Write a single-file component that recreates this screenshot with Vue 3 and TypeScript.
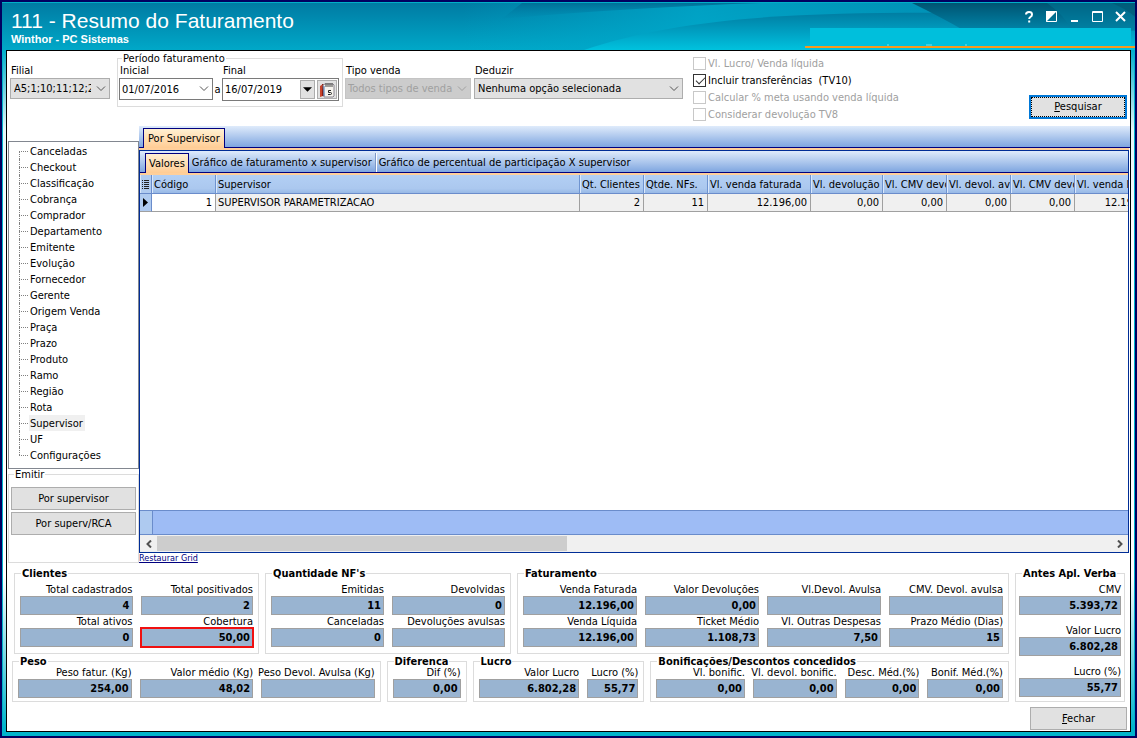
<script setup lang="ts">
import { ref } from 'vue'

interface Field {
  label: string
  value: string
  highlight?: boolean
}
interface Group {
  id: string
  title: string
  fields: Field[]
}
interface Column {
  key: string
  title: string
  value: string
  numeric: boolean
}

const dimensions: string[] = [
  'Canceladas', 'Checkout', 'Classificação', 'Cobrança', 'Comprador', 'Departamento',
  'Emitente', 'Evolução', 'Fornecedor', 'Gerente', 'Origem Venda', 'Praça', 'Prazo',
  'Produto', 'Ramo', 'Região', 'Rota', 'Supervisor', 'UF', 'Configurações',
]
const selected = ref('Supervisor')

const innerTabs: string[] = [
  'Valores',
  'Gráfico de faturamento x supervisor',
  'Gráfico de percentual de participação X supervisor',
]
const activeTab = ref('Valores')

const checks = ref([
  { id: 'chk-lucro', label: 'Vl. Lucro/ Venda líquida', on: false, disabled: true },
  { id: 'chk-transf', label: 'Incluir transferências  (TV10)', on: true, disabled: false },
  { id: 'chk-meta', label: 'Calcular % meta usando venda líquida', on: false, disabled: true },
  { id: 'chk-tv8', label: 'Considerar devolução TV8', on: false, disabled: true },
])

const columns: Column[] = [
  { key: 'codigo', title: 'Código', value: '1', numeric: true },
  { key: 'supervisor', title: 'Supervisor', value: 'SUPERVISOR PARAMETRIZACAO', numeric: false },
  { key: 'clientes', title: 'Qt. Clientes', value: '2', numeric: true },
  { key: 'nfs', title: 'Qtde. NFs.', value: '11', numeric: true },
  { key: 'faturada', title: 'Vl. venda faturada', value: '12.196,00', numeric: true },
  { key: 'devolucao', title: 'Vl. devolução', value: '0,00', numeric: true },
  { key: 'cmv1', title: 'Vl. CMV devo', value: '0,00', numeric: true },
  { key: 'avulsa', title: 'Vl. devol. av', value: '0,00', numeric: true },
  { key: 'cmv2', title: 'Vl. CMV devo', value: '0,00', numeric: true },
  { key: 'liquida', title: 'Vl. venda lí', value: '12.196,00', numeric: true },
]

const topGroups: Group[] = [
  {
    id: 'clientes', title: 'Clientes', fields: [
      { label: 'Total cadastrados', value: '4' },
      { label: 'Total positivados', value: '2' },
      { label: 'Total ativos', value: '0' },
      { label: 'Cobertura', value: '50,00', highlight: true },
    ],
  },
  {
    id: 'notas', title: "Quantidade NF's", fields: [
      { label: 'Emitidas', value: '11' },
      { label: 'Devolvidas', value: '0' },
      { label: 'Canceladas', value: '0' },
      { label: 'Devoluções avulsas', value: '' },
    ],
  },
  {
    id: 'faturamento', title: 'Faturamento', fields: [
      { label: 'Venda Faturada', value: '12.196,00' },
      { label: 'Valor Devoluções', value: '0,00' },
      { label: 'Vl.Devol. Avulsa', value: '' },
      { label: 'CMV. Devol. avulsa', value: '' },
      { label: 'Venda Líquida', value: '12.196,00' },
      { label: 'Ticket Médio', value: '1.108,73' },
      { label: 'Vl. Outras Despesas', value: '7,50' },
      { label: 'Prazo Médio (Dias)', value: '15' },
    ],
  },
]
const lowerGroups: Group[] = [
  {
    id: 'peso', title: 'Peso', fields: [
      { label: 'Peso fatur. (Kg)', value: '254,00' },
      { label: 'Valor médio (Kg)', value: '48,02' },
      { label: 'Peso Devol. Avulsa (Kg)', value: '' },
    ],
  },
  { id: 'diferenca', title: 'Diferenca', fields: [{ label: 'Dif (%)', value: '0,00' }] },
  {
    id: 'lucro', title: 'Lucro', fields: [
      { label: 'Valor Lucro', value: '6.802,28' },
      { label: 'Lucro (%)', value: '55,77' },
    ],
  },
  {
    id: 'bonificacoes', title: 'Bonificações/Descontos concedidos', fields: [
      { label: 'Vl. bonific.', value: '0,00' },
      { label: 'Vl. devol. bonific.', value: '0,00' },
      { label: 'Desc. Méd.(%)', value: '0,00' },
      { label: 'Bonif. Méd.(%)', value: '0,00' },
    ],
  },
]
const groupRows: { name: string; groups: Group[] }[] = [
  { name: 'row-top', groups: topGroups },
  { name: 'row-lower', groups: lowerGroups },
]
const verba: Field[] = [
  { label: 'CMV', value: '5.393,72' },
  { label: 'Valor Lucro', value: '6.802,28' },
  { label: 'Lucro (%)', value: '55,77' },
]
</script>

<template>
  <div class="window">
    <header class="titlebar">
      <svg class="waves" viewBox="0 0 1133 48" preserveAspectRatio="none" aria-hidden="true">
        <defs>
          <linearGradient id="base" x1="0" y1="0" x2="0" y2="1">
            <stop offset="0" stop-color="#007ba3" />
            <stop offset="1" stop-color="#00a8c8" />
          </linearGradient>
          <linearGradient id="glow" x1="0" y1="0" x2="1" y2="0">
            <stop offset="0" stop-color="#00a9cb" stop-opacity="0" />
            <stop offset="0.35" stop-color="#00a9cb" stop-opacity="0.8" />
            <stop offset="1" stop-color="#0086ac" stop-opacity="0.8" />
          </linearGradient>
          <linearGradient id="top" x1="0" y1="0" x2="0" y2="1">
            <stop offset="0" stop-color="#006f97" />
            <stop offset="1" stop-color="#0088ae" stop-opacity="0.2" />
          </linearGradient>
          <linearGradient id="hill" x1="0" y1="0" x2="0" y2="1">
            <stop offset="0" stop-color="#007da2" />
            <stop offset="0.55" stop-color="#00a2c4" />
            <stop offset="1" stop-color="#00c2de" />
          </linearGradient>
          <linearGradient id="night" x1="0" y1="0" x2="0" y2="1">
            <stop offset="0" stop-color="#005472" />
            <stop offset="1" stop-color="#0085a9" />
          </linearGradient>
        </defs>
        <rect width="1133" height="48" fill="url(#base)" />
        <path d="M460 48V0H1133V48Z" fill="url(#glow)" />
        <path d="M520 0H760Q640 4 500 16Z" fill="url(#top)" />
        <path d="M582 48C680 14 800 9 960 10C1030 11 1090 14 1133 18V48Z" fill="url(#hill)" />
        <path d="M910 0H1133V28H962Q938 14 910 0Z" fill="url(#night)" />
        <path d="M1045 0Q1062 12 1070 28H1133V0Z" fill="#007d9e" opacity=".45" />
        <path d="M1110 0Q1124 6 1133 14V0Z" fill="#00526e" opacity=".5" />
      </svg>
      <div class="titles">
        <h1>111 - Resumo do Faturamento</h1>
        <p>Winthor - PC Sistemas</p>
      </div>
      <div class="corner">
        <div class="window-buttons">
          <button type="button" aria-label="Ajuda">
            <svg viewBox="0 0 12 12"><path d="M3 3.600Q3 1 6 1t3 2.400Q9 5 7.400 6Q6.200 6.800 6.200 8M5.200 10.500h2" stroke-width="2" /></svg>
          </button>
          <button type="button" aria-label="Recolher">
            <svg viewBox="0 0 12 12"><path d="M.5 .5h10v10h-10z" /><path d="M0 0H11L0 11Z" fill="#fff" stroke="none" /></svg>
          </button>
          <button type="button" aria-label="Minimizar">
            <svg viewBox="0 0 12 12"><path d="M2 10h7" stroke-width="2" /></svg>
          </button>
          <button type="button" aria-label="Maximizar">
            <svg viewBox="0 0 12 12"><path d="M.5 .5h10v10h-10zM0 1.500h11" /></svg>
          </button>
          <button type="button" aria-label="Fechar janela">
            <svg viewBox="0 0 12 12"><path d="M1 1l9 9M10 1l-9 9" stroke-width="2" /></svg>
          </button>
        </div>
        <div class="banner">
          <svg viewBox="0 0 90 2" aria-hidden="true"><path d="M4 1h2M43 1h6M82 1h2" stroke="#7fdcea" /></svg>
        </div>
      </div>
    </header>

    <div class="frame">
      <main class="content">
        <form class="toolbar" @submit.prevent>
          <div class="field filial">
            <label for="filial">Filial</label>
            <span class="combo">
              <select id="filial"><option>A5;1;10;11;12;2;3;4</option></select>
              <svg class="chevron" viewBox="0 0 10 6"><path d="M1 .5l4 4 4-4" /></svg>
            </span>
          </div>

          <fieldset class="periodo">
            <legend>Período faturamento</legend>
            <div class="field inicial">
              <label for="inicial">Inicial</label>
              <span class="datebox">
                <input id="inicial" type="text" value="01/07/2016" />
                <button type="button" class="drop" aria-label="Abrir data inicial">
                  <svg viewBox="0 0 10 6"><path d="M1 .5l4 4 4-4" /></svg>
                </button>
              </span>
            </div>
            <span class="ate">a</span>
            <div class="field final">
              <label for="final">Final</label>
              <span class="datebox tall">
                <input id="final" type="text" value="16/07/2019" />
                <button type="button" class="raised" aria-label="Abrir data final">
                  <svg class="triangle" viewBox="0 0 10 5"><path d="M0 0h10L5 5z" /></svg>
                </button>
                <button type="button" class="raised calendar" aria-label="Calendário">
                  <svg viewBox="0 0 16 16">
                    <path d="M1 4l3-2v12l-3 1z" fill="#c8442c" />
                    <path d="M3 2h2v12H3z" fill="#8a1d14" />
                    <path d="M4 3l2-1h8l1 1v11l-1 1H5z" fill="#f6f4ee" stroke="#8a8690" />
                    <path d="M5 4v10" stroke="#4c79b8" />
                    <path d="M7 1v4M9 1v4M11 1v4M13 1v4" stroke="#444" />
                    <path d="M12 8.500H9.500v2h2q1 0 1 1t-1 1H9" stroke="#222" fill="none" />
                  </svg>
                </button>
              </span>
            </div>
          </fieldset>

          <div class="field tipo">
            <label for="tipo">Tipo venda</label>
            <span class="combo">
              <select id="tipo" disabled><option>Todos tipos de venda</option></select>
              <svg class="chevron off" viewBox="0 0 10 6"><path d="M1 .5l4 4 4-4" /></svg>
            </span>
          </div>
          <div class="field deduzir">
            <label for="deduzir">Deduzir</label>
            <span class="combo">
              <select id="deduzir"><option>Nenhuma opção selecionada</option></select>
              <svg class="chevron" viewBox="0 0 10 6"><path d="M1 .5l4 4 4-4" /></svg>
            </span>
          </div>

          <div class="checks">
            <label v-for="c in checks" :key="c.id" :for="c.id" :class="{ off: c.disabled }">
              <input :id="c.id" v-model="c.on" type="checkbox" :disabled="c.disabled" />
              <span>{{ c.label }}</span>
            </label>
          </div>

          <button type="submit" class="push search"><span><u>P</u>esquisar</span></button>
        </form>

        <div class="work">
          <aside class="sidebar">
            <ul class="tree">
              <li v-for="d in dimensions" :key="d">
                <button type="button" :class="{ current: d === selected }" @click="selected = d">{{ d }}</button>
              </li>
            </ul>
            <fieldset class="emitir">
              <legend>Emitir</legend>
              <button type="button" class="push">Por supervisor</button>
              <button type="button" class="push">Por superv/RCA</button>
            </fieldset>
          </aside>

          <section class="panel">
            <div class="strip outer"><button type="button" class="tab active">Por Supervisor</button></div>
            <div class="pane">
              <div class="strip inner">
                <button
                  v-for="t in innerTabs" :key="t" type="button" class="tab"
                  :class="{ active: t === activeTab }" @click="activeTab = t"
                >{{ t }}</button>
              </div>
              <div class="grid">
                <table>
                  <colgroup>
                    <col class="c-mark" />
                    <col v-for="c in columns" :key="c.key" :class="'c-' + c.key" />
                  </colgroup>
                  <thead>
                    <tr>
                      <th class="mark" aria-label="Colunas">
                        <svg viewBox="0 0 8 9"><path d="M0 .5h1M2 .5h5M0 2.500h1M2 2.500h5M0 4.500h1M2 4.500h5M0 6.500h1M2 6.500h5M0 8.500h1M2 8.500h5" /></svg>
                      </th>
                      <th v-for="c in columns" :key="c.key">{{ c.title }}</th>
                    </tr>
                  </thead>
                  <tbody>
                    <tr>
                      <td class="mark"><svg viewBox="0 0 8 9"><path d="M1 0l5 4.500L1 9z" fill="#000" stroke="none" /></svg></td>
                      <td v-for="c in columns" :key="c.key" :class="{ num: c.numeric, focus: c.key === 'codigo' }">{{ c.value }}</td>
                    </tr>
                  </tbody>
                </table>
              </div>
              <div class="totals"><span></span></div>
              <div class="scroll">
                <button type="button" aria-label="Rolar à esquerda"><svg viewBox="0 0 6 8"><path d="M5 .5L1.500 4 5 7.500" /></svg></button>
                <div class="track"><div class="thumb"></div></div>
                <button type="button" aria-label="Rolar à direita"><svg viewBox="0 0 6 8"><path d="M1 .5L4.500 4 1 7.500" /></svg></button>
              </div>
            </div>
            <a class="restore" href="#">Restaurar Grid</a>
          </section>
        </div>

        <div class="summary">
          <div class="rows">
            <div v-for="row in groupRows" :key="row.name" class="row" :class="row.name">
              <fieldset v-for="g in row.groups" :key="g.id" class="group" :class="'g-' + g.id">
                <legend>{{ g.title }}</legend>
                <div v-for="(f, i) in g.fields" :key="f.label" class="metric">
                  <label :for="g.id + i">{{ f.label }}</label>
                  <input :id="g.id + i" type="text" readonly :value="f.value" :class="{ alert: f.highlight }" />
                </div>
              </fieldset>
            </div>
          </div>
          <fieldset class="group g-verba">
            <legend>Antes Apl. Verba</legend>
            <div v-for="(f, i) in verba" :key="f.label" class="metric">
              <label :for="'verba' + i">{{ f.label }}</label>
              <input :id="'verba' + i" type="text" readonly :value="f.value" />
            </div>
          </fieldset>
        </div>

        <footer><button type="button" class="push close"><u>F</u>echar</button></footer>
      </main>
    </div>
  </div>
</template>

<style>
body { margin: 0; background: #fff; }
</style>

<style scoped>
* { box-sizing: border-box; }
.window {
  display: flex; flex-direction: column; min-height: 100vh;
  border: 2px solid #000060; background: #00b4cc;
  font-family: "DejaVu Sans Condensed", "DejaVu Sans", sans-serif; font-size: 11px; line-height: 13px; color: #000;
}
button, input, select { font: inherit; color: inherit; margin: 0; border-radius: 0; }
button { padding: 0; border: 0; background: none; }
fieldset { margin: 0; padding: 0; min-width: 0; border: 1px solid #dcdcdc; position: relative; }
legend { position: absolute; padding: 0 1px; background: #fff; white-space: nowrap; line-height: 12px; }
label { white-space: nowrap; }
svg { display: block; }

.titlebar { position: relative; display: flex; justify-content: space-between; height: 48px; border-top: 1px solid #00b0c8; overflow: hidden; }
.waves { position: absolute; inset: 0; width: 100%; height: 100%; }
.titles { position: relative; padding: 6px 0 0 9px; color: #fff; font-family: "Liberation Sans", Arial, sans-serif; }
h1 { margin: 0; font-size: 21px; line-height: 24px; font-weight: 400; }
.titles p { margin: 0; font-size: 11px; line-height: 13px; font-weight: 700; }
.corner { position: relative; display: flex; flex-direction: column; width: 330px; padding-top: 8px; }
.window-buttons { display: flex; justify-content: flex-end; gap: 11px; padding-right: 8px; margin-bottom: 5px; }
.window-buttons button { width: 12px; height: 12px; }
.window-buttons svg { width: 12px; height: 12px; fill: none; stroke: #fff; }
.banner { display: flex; align-items: flex-end; height: 20px; padding-left: 78px; border-bottom: 2px solid #f79a1c; background: linear-gradient(#00bfdc, #00bfdc) no-repeat 5px 0 / calc(100% - 9px) 100%; }
.banner svg { width: 90px; height: 2px; }

.frame {
  flex: 1; display: flex; padding: 0 3px 4px;
  border-left: 1px solid #00b4cc; border-right: 1px solid #00b4cc;
  background: linear-gradient(#00aecb 0, #e4f8fa 80px, #fff 200px, #fff calc(100% - 160px), #00b4cc calc(100% - 8px));
}
.content { flex: 1; min-width: 0; display: flex; flex-direction: column; border: 1px solid #000; background: #fff; }

.toolbar { display: flex; align-items: flex-start; height: 75px; padding: 0 3px; }
.field { display: flex; flex-direction: column; }
.field label { padding-left: 1px; height: 14px; line-height: 14px; }
.toolbar > .field { padding-top: 13px; }
.filial { width: 100px; margin-right: 7px; }
.tipo { width: 126px; margin: 0 3px 0 2px; }
.deduzir { width: 209px; }
.combo { display: grid; }
.combo > * { grid-area: 1 / 1; }
.combo select { appearance: none; width: 100%; height: 21px; padding: 0 18px 0 3px; border: 1px solid #adadad; background: #e1e1e1; }
.combo select:disabled { padding-right: 14px; padding-left: 2px; border-color: #c4c4c4; background: #cccccc; color: #a0a0a0; opacity: 1; }
.chevron { justify-self: end; align-self: center; width: 10px; height: 6px; margin-right: 4px; fill: none; stroke: #555; pointer-events: none; }
.chevron.off { stroke: #a0a0a0; }

.periodo { display: flex; width: 226px; height: 49px; margin-top: 7px; padding: 5px 0 0 1px; }
.periodo legend { left: 4px; top: -6px; }
.inicial { width: 94px; }
.final { width: 117px; }
.ate { width: 9px; padding-top: 19px; text-align: center; }
.datebox { display: flex; align-items: center; height: 22px; border: 1px solid #7a7a7a; background: #fff; }
.datebox.tall { height: 23px; gap: 2px; padding-right: 1px; }
.datebox input { flex: 1; min-width: 0; height: 18px; padding: 0 2px; border: 0; background: none; outline: 0; }
.drop svg { width: 10px; height: 6px; margin-right: 3px; fill: none; stroke: #555; }
.raised { display: grid; place-items: center; width: 15px; height: 19px; border: 1px solid #adadad; background: #e1e1e1; }
.raised.calendar { width: 20px; }
.raised svg { width: 16px; height: 16px; }
.raised .triangle { width: 9px; height: 5px; }
.calendar svg { fill: none; }

.checks { display: flex; flex-direction: column; gap: 2px; padding: 5px 0 0 10px; }
.checks label { display: flex; align-items: center; gap: 2px; height: 15px; white-space: pre; }
.checks .off { color: #a0a0a0; }
.checks input { appearance: none; width: 13px; height: 13px; border: 1px solid #333; background: #fff; display: grid; }
.checks input:disabled { border-color: #c8c8c8; }
.checks input:checked::before { content: ""; width: 8px; height: 4px; margin: 2px 0 0 2px; border: solid #333; border-width: 0 0 1px 1px; transform: rotate(-45deg); }

.push { height: 23px; border: 1px solid #adadad; background: #e1e1e1; text-align: center; }
.search { width: 98px; height: 24px; margin: 44px 0 0 auto; padding: 0; border: 2px solid #0078d7; }
.search span { display: block; height: 20px; line-height: 18px; border: 1px dotted #000; }

.work { flex: 1; display: flex; min-height: 437px; }
.sidebar { width: 132px; padding: 15px 0 1px 1px; display: flex; flex-direction: column; flex: none; }
.tree { flex: 1; margin: 0 0 5px; padding: 1px 0 0 10px; list-style: none; border: 1px solid #828790; }
.tree li { position: relative; height: 16px; padding-left: 10px; }
.tree li::before { content: ""; position: absolute; left: 0; top: 0; bottom: 0; border-left: 1px dotted #808080; }
.tree li:first-child::before { top: 8px; }
.tree li:last-child::before { bottom: 8px; }
.tree li::after { content: ""; position: absolute; left: 0; top: 8px; width: 9px; border-top: 1px dotted #808080; }
.tree button { display: block; height: 16px; padding: 1px 2px 0 1px; line-height: 15px; }
.tree .current { background: #f0f0f0; }
.emitir { display: flex; flex-direction: column; gap: 2px; height: 89px; padding: 12px 2px 0; }
.emitir legend { left: 5px; top: -6px; }

.panel { flex: 1; min-width: 0; display: flex; flex-direction: column; }
.strip { display: flex; align-items: flex-end; background: linear-gradient(#dfebfb, #7fa6e0); }
.outer { height: 22px; padding-left: 4px; border-bottom: 1px solid #000080; }
.pane { flex: 1; display: flex; flex-direction: column; min-width: 0; border: 1px solid #002d96; margin: 2px 1px 0 0; position: relative; box-shadow: 0 -2px #ffcf9a; }
.inner { height: 22px; padding-left: 5px; border-bottom: 1px solid #000080; }
.tab { height: 19px; margin-top: auto; padding: 0 3px; white-space: nowrap; }
.tab.active { height: 20px; margin-bottom: -1px; padding: 0 4px; border: 1px solid #000080; border-bottom: 0; background: linear-gradient(#fff0d2, #ffcc94); }
.inner .tab.active { padding: 0 3px; }
.inner .tab:not(.active) + .tab { border-left: 1px solid #7c98c8; box-shadow: inset 1px 0 #fff; }
.grid { flex: 1; overflow: hidden; border-top: 2px solid #ffcf9a; background: #fff; }
table { width: calc(100% + 31px); border-collapse: separate; border-spacing: 0; table-layout: fixed; }
.c-mark { width: 12px; }
.c-codigo, .c-clientes, .c-nfs, .c-cmv1, .c-avulsa, .c-cmv2 { width: 64px; }
.c-faturada { width: 103px; }
.c-devolucao { width: 72px; }
.c-liquida { width: 84px; }
th, td { padding: 0 3px 0 2px; overflow: hidden; white-space: nowrap; text-align: left; font-weight: 400; }
th { height: 19px; padding-top: 1px; padding-right: 0; border-right: 1px solid #6f94d0; border-bottom: 1px solid #6a8ccb; background: linear-gradient(#b3cff4, #abc8ef 75%, #98b9e6); box-shadow: inset 1px 0 #d9e7fa; }
td { height: 18px; border-right: 1px solid #a0a0a0; border-bottom: 1px solid #a0a0a0; background: #f0f0f0; }
td.focus { background: #fff; }
.num { text-align: right; }
.mark { padding: 0 0 0 2px; border-right-color: #6a8ccb; background: #b0cbf0; }
.mark svg { width: 8px; height: 9px; stroke: #222; }
.totals { height: 25px; border-top: 1px solid #6a8ccb; border-bottom: 1px solid #6a8ccb; background: #9ebcf5; }
.totals span { display: block; width: 13px; height: 100%; border-right: 1px solid #6a8ccb; background: #aecaf0; }
.scroll { display: flex; height: 17px; background: #f0f0f0; }
.scroll button { display: grid; place-items: center; width: 17px; height: 17px; }
.scroll svg { width: 6px; height: 8px; fill: none; stroke: #505050; stroke-width: 2; }
.track { flex: 1; padding: 1px 0; }
.thumb { width: 43%; height: 15px; background: #cdcdcd; }
.restore { align-self: flex-start; font-size: 9px; line-height: 11px; color: #000080; }

.summary { display: flex; gap: 6px; padding: 9px 5px 0; }
.rows { flex: 1; min-width: 0; display: flex; flex-direction: column; gap: 7px; }
.row { display: grid; gap: 6px; }
.row-top { grid-template-columns: 245fr 246fr 492fr; margin-left: 2px; }
.row-lower { grid-template-columns: 369fr 80fr 172fr 359fr; }
.group { display: grid; gap: 0 8px; padding: 9px 5px 6px; grid-template-columns: 1fr 1fr; align-content: start; }
.group legend { left: 6px; top: -6px; font-weight: 700; }
.row-lower .group { padding: 4px 5px 3px; }
.g-faturamento { grid-template-columns: repeat(4, 1fr); }
.g-peso { grid-template-columns: repeat(3, 1fr); }
.g-diferenca { grid-template-columns: 1fr; }
.g-lucro { grid-template-columns: 100fr 51fr; }
.g-bonificacoes { grid-template-columns: 89fr 84fr 75fr 76fr; }
.g-verba { width: 110px; grid-template-columns: 1fr; row-gap: 9px; padding: 9px 3px 3px; }
.metric { display: flex; flex-direction: column; align-items: flex-end; min-width: 0; }
.metric input { width: 100%; height: 19px; padding: 0 2px 1px; border: 1px solid #a0a0a0; background: #99b4d1; text-align: right; font-weight: 700; outline: 0; }
.metric .alert { outline: 2px solid #f01010; outline-offset: -1px; }

footer { display: flex; justify-content: flex-end; padding: 5px 3px 1px; }
.close { width: 97px; }
</style>
